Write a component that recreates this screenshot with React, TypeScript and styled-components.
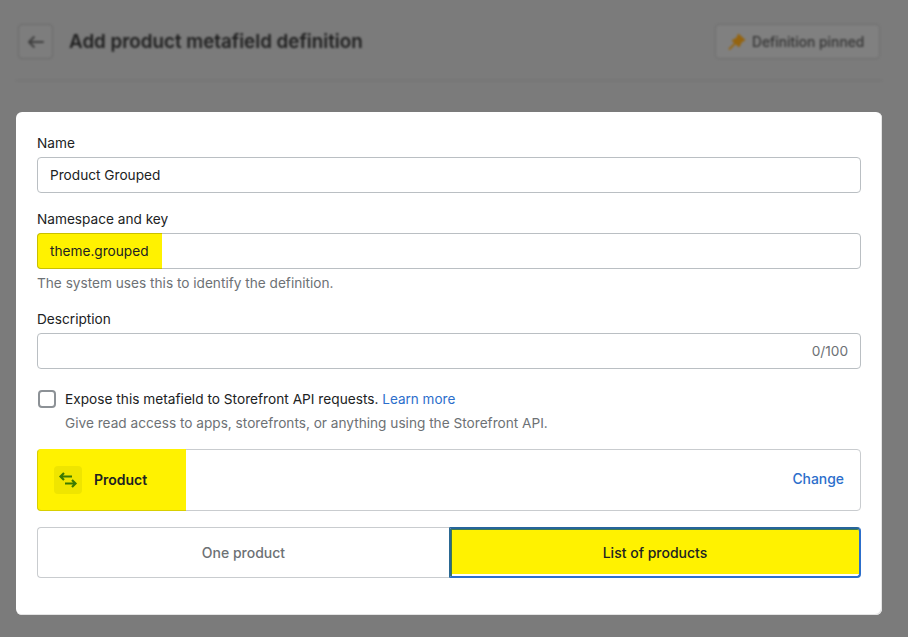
import styled, { createGlobalStyle } from 'styled-components';

const GlobalStyle = createGlobalStyle`
  html, body {
    margin: 0;
    padding: 0;
    background: #7b7b7b;
  }
  body {
    width: 908px;
    height: 637px;
    overflow: hidden;
    font-family: Inter, "Liberation Sans", sans-serif;
    font-size: 13.65px;
    color: #202223;
  }
`;

const Page = styled.div`
  display: flex;
  flex-direction: column;
  height: 637px;
  padding: 0 26px 0 16px;
  box-sizing: border-box;
  background: #7b7b7b;
`;

const Header = styled.header`
  display: flex;
  align-items: center;
  justify-content: space-between;
  height: 81px;
  margin-bottom: 31px;
  padding: 24px 2px 21px;
  box-sizing: border-box;
  border-bottom: 1px solid #727272;
  filter: blur(0.8px);
`;

const HeaderLeft = styled.div`
  display: flex;
  align-items: center;
  gap: 16px;
`;

const BackButton = styled.div`
  display: flex;
  align-items: center;
  justify-content: center;
  width: 35px;
  height: 35px;
  box-sizing: border-box;
  border: 1px solid #6a6a6a;
  border-radius: 4px;
  background: #7d7d7d;
`;

const Title = styled.h1`
  margin: 0;
  font-size: 18.8px;
  font-weight: 600;
  color: #1f1f1f;
`;

const PinnedButton = styled.div`
  display: flex;
  align-items: center;
  gap: 6px;
  width: 165px;
  height: 35px;
  padding-left: 12px;
  box-sizing: border-box;
  border: 1px solid #6e6e6e;
  border-radius: 4px;
  background: #808080;
  font-size: 13.8px;
  font-weight: 500;
  color: #333;
`;

const Card = styled.main`
  display: flex;
  flex-direction: column;
  width: 866px;
  height: 503px;
  padding: 21px 21px 0;
  box-sizing: border-box;
  border-radius: 6px;
  background: #fff;
  box-shadow: inset -1px -1px 0 #e4e4e4;
`;

const Label = styled.div`
  height: 24px;
  line-height: 21px;
`;

const Field = styled.div`
  display: flex;
  align-items: stretch;
  height: 36px;
  box-sizing: border-box;
  border: 1px solid #babfc3;
  border-radius: 4px;
  line-height: 34px;
`;

const FieldText = styled.span`
  padding-left: 12px;
`;

const FieldHighlight = styled.span`
  margin: -1px 0 -1px -1px;
  padding: 0 13px 0 12px;
  border: 1px solid #c9c000;
  border-right: none;
  border-radius: 4px 0 0 4px;
  background: #fff200;
`;

const FieldCount = styled.span`
  margin-left: auto;
  padding-right: 12px;
  color: #6d7175;
`;

const Hint = styled.div<{ $indent?: number }>`
  margin-top: 5px;
  padding-left: ${(props) => props.$indent ?? 0}px;
  line-height: 18px;
  color: #6d7175;
`;

const FieldGroup = styled.section<{ $gap: number }>`
  margin-bottom: ${(props) => props.$gap}px;
`;

const CheckRow = styled.div`
  display: flex;
  align-items: center;
  gap: 9px;
  height: 20px;
  padding-left: 1px;
  font-size: 13.7px;
`;

const Checkbox = styled.span`
  width: 18px;
  height: 18px;
  box-sizing: border-box;
  border: 2px solid #8c9196;
  border-radius: 4px;
  background: #fff;
`;

const TextLink = styled.a`
  color: #2c6ecb;
`;

const LearnMore = styled(TextLink)`
  font-size: 13.5px;
`;

const TypeRow = styled.div`
  display: flex;
  align-items: stretch;
  justify-content: space-between;
  height: 62px;
  margin: 17px 0 16px;
  box-sizing: border-box;
  border: 1px solid #c9cccf;
  border-radius: 4px;
`;

const TypeSelected = styled.div`
  display: flex;
  align-items: center;
  gap: 12px;
  width: 149px;
  margin: -1px 0 -1px -1px;
  padding-left: 16px;
  box-sizing: border-box;
  border: 1px solid #fff200;
  border-bottom-color: #d8cf00;
  border-left-color: #d8cf00;
  border-right: none;
  border-radius: 4px 0 0 4px;
  background: #fff200;
  font-size: 14px;
  font-weight: 600;
`;

const TypeIcon = styled.span`
  display: flex;
  width: 28px;
  height: 28px;
  border-radius: 4px;
  background: #efe500;
`;

const TypeName = styled.span`
  padding-bottom: 2px;
`;

const ChangeLink = styled(TextLink)`
  align-self: center;
  padding: 0 16px 2px 0;
  font-size: 13.9px;
  font-weight: 500;
`;

const Segments = styled.div`
  display: grid;
  grid-template-columns: 412px 412px;
  height: 51px;
`;

const Segment = styled.div<{ $selected?: boolean }>`
  display: flex;
  align-items: center;
  justify-content: center;
  box-sizing: border-box;
  font-size: 14px;
  font-weight: 500;
  ${(props) =>
    props.$selected
      ? `
    padding-bottom: 1px;
    border: 2px solid #2c6ecb;
    border-top-color: #26659a;
    border-left-color: #2a6892;
    border-radius: 0 4px 4px 0;
    background: linear-gradient(#fff200 calc(100% - 2px), #fff 0);
    box-shadow: inset 1px 1px 0 #3f7a50;
    color: #202223;
  `
      : `
    border: 1px solid #c9cccf;
    border-right: none;
    border-radius: 4px 0 0 4px;
    color: #6d7175;
  `}
`;

const App = () => {
  return (
    <>
      <GlobalStyle />
      <Page>
        <Header>
          <HeaderLeft>
            <BackButton>
              <svg width="20" height="20" viewBox="0 0 20 20" fill="#3f3f3f">
                <path d="M17 9H5.4l3.3-3.3a1 1 0 0 0-1.4-1.4l-5 5a1 1 0 0 0 0 1.4l5 5a1 1 0 0 0 1.4-1.4L5.4 11H17a1 1 0 1 0 0-2z" />
              </svg>
            </BackButton>
            <Title>Add product metafield definition</Title>
          </HeaderLeft>
          <PinnedButton>
            <svg width="18" height="18" viewBox="0 0 18 18" fill="#95640f" stroke="#95640f" strokeWidth="1.4">
              <path d="M10.5 1.5 16.5 7l-3 1.5L11 13.500 4.500 7.500 9 5z" strokeLinejoin="round" />
              <path d="M7 10.500 1 16.500" strokeWidth="1.8" />
            </svg>
            Definition pinned
          </PinnedButton>
        </Header>
        <Card>
          <FieldGroup $gap={16}>
            <Label>Name</Label>
            <Field>
              <FieldText>Product Grouped</FieldText>
            </Field>
          </FieldGroup>
          <FieldGroup $gap={17}>
            <Label>Namespace and key</Label>
            <Field>
              <FieldHighlight>theme.grouped</FieldHighlight>
            </Field>
            <Hint>The system uses this to identify the definition.</Hint>
          </FieldGroup>
          <FieldGroup $gap={20}>
            <Label>Description</Label>
            <Field>
              <FieldCount>0/100</FieldCount>
            </Field>
          </FieldGroup>
          <CheckRow>
            <Checkbox />
            <span>
              Expose this metafield to Storefront API requests.{' '}
              <LearnMore>Learn more</LearnMore>
            </span>
          </CheckRow>
          <Hint $indent={28}>
            Give read access to apps, storefronts, or anything using the
            Storefront API.
          </Hint>
          <TypeRow>
            <TypeSelected>
              <TypeIcon>
                <svg width="28" height="28" viewBox="0 0 28 28" fill="none" stroke="#3c7a00" strokeWidth="2.2">
                  <path d="M18 10.500H6.500M10 7 6.500 10.500 10 14" />
                  <path d="M11 17.500h10.500M18 14 21.500 17.500 18 21" />
                </svg>
              </TypeIcon>
              <TypeName>Product</TypeName>
            </TypeSelected>
            <ChangeLink>Change</ChangeLink>
          </TypeRow>
          <Segments>
            <Segment>One product</Segment>
            <Segment $selected>List of products</Segment>
          </Segments>
        </Card>
      </Page>
    </>
  );
};

export default App;
